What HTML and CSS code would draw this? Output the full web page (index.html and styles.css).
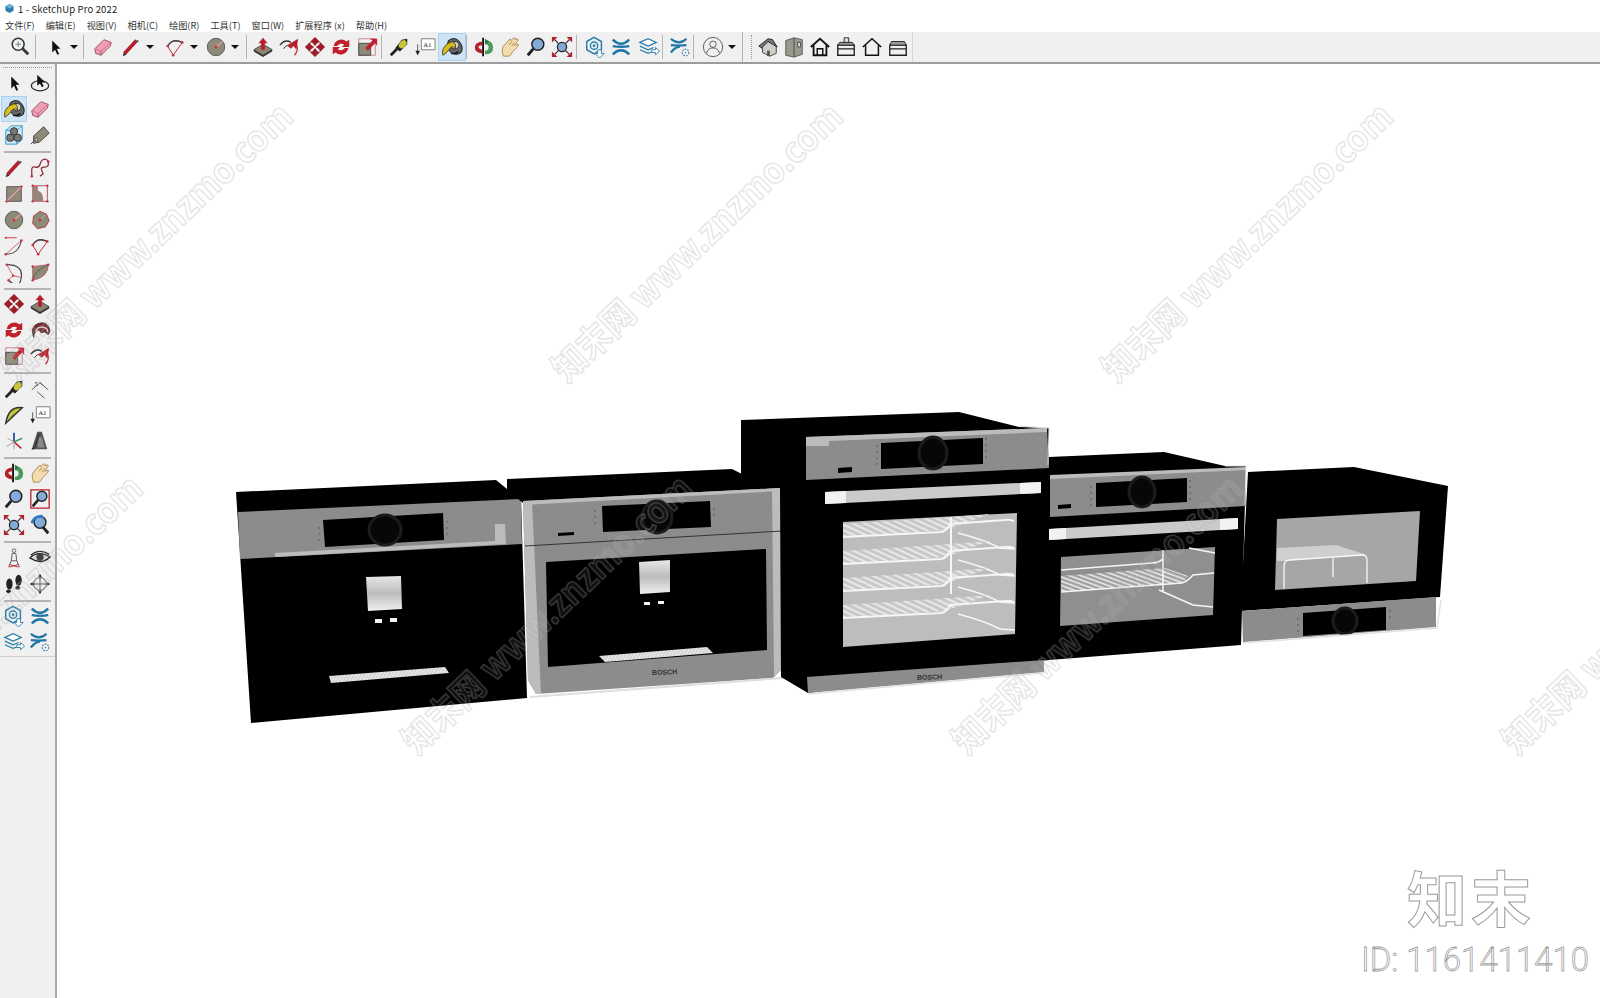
FILE: index.html
```html
<!DOCTYPE html>
<html lang="zh-CN">
<head>
    <meta charset="UTF-8" />
    <title>1 - SketchUp Pro 2022</title>
    <link rel="stylesheet" href="styles.css">
</head>
<body>
<svg class="defs" width="0" height="0">
    <defs>
        <!-- iconos de la barra -->
        <symbol id="i-search" viewBox="0 0 24 24"><circle cx="10" cy="9" r="6.5" fill="#eef3f3" stroke="#333" stroke-width="1.6"/><path d="M10 6v6M7 9h6" stroke="#777"/><path d="M15 14l6 6" stroke="#333" stroke-width="3"/></symbol>
        <symbol id="i-select" viewBox="0 0 24 24"><path d="M9 5v13l3-3 2.5 5.5 2-1-2.500-5.500h4z" fill="#111"/></symbol>
        <symbol id="i-eraser" viewBox="0 0 24 24"><path d="M3 14L13 4l8 3-1 4-10 10-6-2z" fill="#f0a0b6" stroke="#9c4a62"/><path d="M4 14l6 3 10-10" fill="none" stroke="#c86a86"/><path d="M10 17v4" stroke="#9c4a62"/></symbol>
        <symbol id="i-pencil" viewBox="0 0 24 24"><path d="M5 19L18 5" stroke="#b3202c" stroke-width="4"/><path d="M3 22l1-4 3 2.500z" fill="#333"/><path d="M17 6l2-2 1.500 1.500-2 2z" fill="#555"/></symbol>
        <symbol id="i-arc3" viewBox="0 0 24 24"><path d="M4 11Q9 2 20 7L10 21z" fill="none" stroke="#b3202c"/><path d="M4 11Q9 2 20 7" fill="none" stroke="#444" stroke-width="1.400"/><g fill="#c8303c"><circle cx="4" cy="11" r="1.400"/><circle cx="20" cy="7" r="1.400"/><circle cx="10" cy="21" r="1.400"/></g></symbol>
        <symbol id="i-circle" viewBox="0 0 24 24"><circle cx="12" cy="12" r="9.500" fill="#8f8a78" stroke="#555"/><path d="M12 12l7-6" stroke="#e0a0a8" stroke-width="1.400"/><circle cx="12" cy="12" r="1.500" fill="#c8303c"/></symbol>
        <symbol id="i-poly" viewBox="0 0 24 24"><path d="M12 2.500l7 3 3 7-4 7-9 2-5-6 1-8z" fill="#8f8a78" stroke="#b04050"/><path d="M12 12l6-6" stroke="#e0a0a8"/><circle cx="12" cy="12" r="1.500" fill="#c8303c"/></symbol>
        <symbol id="i-push" viewBox="0 0 24 24"><path d="M2 15l10-6 10 6-10 6z" fill="#8a8672" stroke="#444"/><path d="M2 15v2l10 6 10-6v-2l-10 6z" fill="#333"/><path d="M12 2l5 6h-3v7h-4V8H7z" fill="#b81e2a"/></symbol>
        <symbol id="i-follow" viewBox="0 0 24 24"><path d="M2 10Q8 3 14 7" fill="none" stroke="#333" stroke-width="1.500"/><path d="M6 14Q9 9 13 11" fill="none" stroke="#333"/><path d="M18 21Q23 15 20 9" fill="none" stroke="#c8303c" stroke-width="1.400"/><path d="M10 10l12-7-2 12-3-4-3 3z" fill="#b81e2a"/></symbol>
        <symbol id="i-move" viewBox="0 0 24 24"><g fill="#9c1c28"><path d="M12 1l5.500 5.500-3 1L12 11 9.500 7.500l-3-1z"/><path d="M12 23l5.500-5.500-3-1L12 13l-2.500 3.500-3 1z"/><path d="M1 12l5.500-5.500 1 3L11 12l-3.500 2.500-1 3z"/><path d="M23 12l-5.500-5.500-1 3L13 12l3.500 2.500 1 3z"/></g></symbol>
        <symbol id="i-rotate" viewBox="0 0 24 24"><path d="M4 11a8.500 8.500 0 0 1 14-5l3-2v8h-8l2.500-2.500A5 5 0 0 0 8 11z" fill="#c0202c"/><path d="M20 13a8.500 8.500 0 0 1-14 5l-3 2v-8h8l-2.500 2.500A5 5 0 0 0 16 13z" fill="#c0202c"/></symbol>
        <symbol id="i-scale" viewBox="0 0 24 24"><path d="M3 3h18v18H3z" fill="none" stroke="#c8808a"/><path d="M3 8h13v13H3z" fill="#8f8a78" stroke="#444"/><path d="M10 13l8-8-3-2h8v8l-2-3-8 8z" fill="#c0202c"/></symbol>
        <symbol id="i-offset" viewBox="0 0 24 24"><path d="M5 20Q1 8 10 5t12 5q2 4-1 7l-4-3-4 1q-2-5-5-2t-3 7z" fill="#7a2a32" stroke="#333"/><path d="M7 14q2-6 8-5t5 5" fill="none" stroke="#e4d8c8" stroke-width="1.500"/></symbol>
        <symbol id="i-tape" viewBox="0 0 24 24"><path d="M3 21l7-7" stroke="#222" stroke-width="3"/><path d="M8 13l7-9 6-1 0 6-8 8z" fill="#222"/><ellipse cx="16" cy="9" rx="3.500" ry="5" fill="#c9c43a" transform="rotate(40 16 9)"/></symbol>
        <symbol id="i-dims" viewBox="0 0 24 24"><path d="M3 13L12 5l3 3M12 5l9 8M9 15l8 7" fill="none" stroke="#555"/><text x="6" y="9" class="ico-txt">5</text></symbol>
        <symbol id="i-proto" viewBox="0 0 24 24"><path d="M3 21L21 4q-15-2-18 17z" fill="#c9c43a" stroke="#333" stroke-width="1.600"/><path d="M7 17q3-5 8-8" fill="none" stroke="#555"/></symbol>
        <symbol id="i-text" viewBox="0 0 24 24"><path d="M8 3h15v12H8z" fill="#fff" stroke="#777"/><text x="10" y="12.500" class="ico-txt">A1</text><path d="M4 9v8" stroke="#555"/><path d="M1.500 16h5L4 21z" fill="#222"/></symbol>
        <symbol id="i-axes" viewBox="0 0 24 24"><path d="M12 3v10" stroke="#2950a8" stroke-width="2"/><path d="M12 13l9-4" stroke="#3b9a5a" stroke-width="1.600"/><path d="M12 13l8 7" stroke="#c0202c" stroke-width="1.600"/><path d="M12 13l-8 5" stroke="#999"/><path d="M12 13L5 9" stroke="#999"/><path d="M12 13v8" stroke="#999"/></symbol>
        <symbol id="i-a3d" viewBox="0 0 24 24"><path d="M9 2h5l6 19H3z" fill="#555"/><path d="M3 21l3-1 5-16" fill="none" stroke="#222"/><path d="M11 8h3l3 11h-8z" fill="#8a8a8a"/></symbol>
        <symbol id="i-paint" viewBox="0 0 24 24"><path d="M8 5q7-5 12 1t2 12q-5 4-11 0T8 5z" fill="#666" stroke="#111"/><ellipse cx="15" cy="10" rx="4.500" ry="4" fill="#d8d4c4" stroke="#222"/><path d="M2 21q-2-8 6-13t8 5q-4-3-7 1.500T2 21z" fill="#d9bf1e" stroke="#222" stroke-width=".8"/><path d="M11 19q4 1 8-2" fill="none" stroke="#111" stroke-width="1.500"/></symbol>
        <symbol id="i-orbit" viewBox="0 0 24 24"><path d="M11 2v20" stroke="#111" stroke-width="2"/><path d="M10 6Q2 7 2 12.500T10 19v-4q-4-1-4-3t4-2z" fill="#b81e2a"/><path d="M13 5q9 0 9 7.500T13 20v-4q4 0 4-3.500T13 9z" fill="#4d9a5e"/><path d="M13 3l5 3-5 3z" fill="#2e7a44"/></symbol>
        <symbol id="i-orbit2" viewBox="0 0 24 24"><ellipse cx="12" cy="15" rx="9.500" ry="5.500" fill="none" stroke="#333" stroke-width="1.400"/><path d="M9 3v12l3-2.500 2 4 2-1-2-4h4z" fill="#111"/></symbol>
        <symbol id="i-pan" viewBox="0 0 24 24"><path d="M5 22q-3-7 0-11l6-7q2-1 2 1l3-3q2 0 1.500 2L20 3q2 1 0 3l-3 4 4-1q1 2-2 4l-4 4q-2 4-4 5z" fill="#f3dcae" stroke="#a58a58"/><path d="M11 10l3-4M14 11l3-4" stroke="#a58a58" fill="none"/></symbol>
        <symbol id="i-zoom" viewBox="0 0 24 24"><circle cx="14" cy="9" r="6.500" fill="#82abd8" stroke="#222" stroke-width="1.600"/><path d="M9 14l-6 7" stroke="#222" stroke-width="3.200"/></symbol>
        <symbol id="i-zoomw" viewBox="0 0 24 24"><path d="M2 2h20v20H2z" fill="none" stroke="#b81e2a" stroke-width="1.400"/><circle cx="14" cy="9" r="5.500" fill="#82abd8" stroke="#222" stroke-width="1.500"/><path d="M10 13l-6 7" stroke="#222" stroke-width="2.800"/></symbol>
        <symbol id="i-ext" viewBox="0 0 24 24"><circle cx="12" cy="12" r="5" fill="#82abd8" stroke="#222" stroke-width="1.400"/><path d="M8 8L4 4M16 8l4-4M8 16l-4 4M16 16l4 4" stroke="#333" stroke-width="1.400"/><path d="M1 1h6L1 7zM23 1h-6l6 6zM1 23h6l-6-6zM23 23h-6l6-6z" fill="#b81e2a"/></symbol>
        <symbol id="i-prev" viewBox="0 0 24 24"><circle cx="12" cy="9" r="6.500" fill="#82abd8" stroke="#222" stroke-width="1.500"/><path d="M3 10q3-9 11-7l-1-2" fill="none" stroke="#2a78c8" stroke-width="2.600"/><path d="M15 14l6 7" stroke="#222" stroke-width="3.200"/></symbol>
        <symbol id="i-walk" viewBox="0 0 24 24"><circle cx="12" cy="4" r="2" fill="none" stroke="#666"/><path d="M10 7h4l1 8h-6zM9 15l-3 7M15 15l3 7" fill="none" stroke="#555"/><path d="M7 19l10 3M17 19L7 22" stroke="#c0202c"/></symbol>
        <symbol id="i-eye" viewBox="0 0 24 24"><path d="M1 12Q10 3 23 11q-9 9-22 1z" fill="#ddd" stroke="#222" stroke-width="1.500"/><circle cx="12" cy="11" r="4" fill="#444"/><path d="M2 9q9-8 20-1" fill="none" stroke="#333" stroke-width="1.500"/></symbol>
        <symbol id="i-foot" viewBox="0 0 24 24"><ellipse cx="7" cy="12" rx="3.500" ry="6" fill="#222"/><ellipse cx="6" cy="20" rx="2.500" ry="2" fill="#222"/><ellipse cx="17" cy="8" rx="3.500" ry="6" fill="#222"/><ellipse cx="16" cy="16" rx="2.500" ry="2" fill="#222"/></symbol>
        <symbol id="i-pos" viewBox="0 0 24 24"><circle cx="12" cy="12" r="7" fill="none" stroke="#444"/><path d="M12 2v20M2 12h20" stroke="#444"/><path d="M12 1l2 3h-4zM12 23l2-3h-4zM1 12l3-2v4zM23 12l-3-2v4z" fill="#222"/></symbol>
        <symbol id="i-ware" viewBox="0 0 24 24"><path d="M11 1.500l8 4.500v9l-8 4.500L3 15V6z" fill="none" stroke="#2a7ea8" stroke-width="1.600"/><circle cx="11" cy="10.500" r="4" fill="none" stroke="#2a7ea8" stroke-width="1.500"/><circle cx="11" cy="10.500" r="1.500" fill="#2a7ea8"/><path d="M15 15h4v4h3l-5 5-5-5h3z" fill="#fff" stroke="#2a7ea8"/></symbol>
        <symbol id="i-xw" viewBox="0 0 24 24"><path d="M3 4q9 9 18 0M3 20q9-9 18 0M3 11q9 1.500 18 0" fill="none" stroke="#1f77a8" stroke-width="2.600"/></symbol>
        <symbol id="i-stack" viewBox="0 0 24 24"><path d="M2 7l9-4 9 4-9 4z" fill="#fff" stroke="#2a7ea8" stroke-width="1.300"/><path d="M2 11l9 4 6-2.500M2 15l9 4 4-1.500" fill="none" stroke="#2a7ea8" stroke-width="1.300"/><path d="M15 15h4v-2.500l4.500 4-4.500 4V18h-4z" fill="#fff" stroke="#2a7ea8"/></symbol>
        <symbol id="i-xgear" viewBox="0 0 24 24"><path d="M2 3q9 8 17 0M2 18q6-7 10-6M2 10q9 1 17 0" fill="none" stroke="#1f77a8" stroke-width="2.400"/><circle cx="18" cy="18" r="3.500" fill="#fff" stroke="#5a8aa8" stroke-width="1.500" stroke-dasharray="2 1"/><circle cx="18" cy="18" r="1" fill="#5a8aa8"/></symbol>
        <symbol id="i-cube" viewBox="0 0 24 24"><path d="M3 7l6-5h12v15l-6 5H3z" fill="#cfe8f2" stroke="#2a9bd0"/><path d="M3 7h12v15M15 7l6-5" fill="none" stroke="#2a9bd0"/><circle cx="12" cy="8" r="4" fill="#777" stroke="#333"/><circle cx="8" cy="15" r="4" fill="#777" stroke="#333"/><circle cx="16" cy="15" r="4" fill="#777" stroke="#333"/></symbol>
        <symbol id="i-tag" viewBox="0 0 24 24"><path d="M5 13L16 3l6 7-11 10-6 1z" fill="#8f8a78" stroke="#444"/><circle cx="8" cy="17" r="1.500" fill="#fff" stroke="#333"/><path d="M2 22l3-3" stroke="#333"/></symbol>
        <symbol id="i-free" viewBox="0 0 24 24"><path d="M3 21V14q0-4 4-3t5-3 3-5q5-2 6 3t-4 5-3 4 1 4-3 2" fill="none" stroke="#8a2e38" stroke-width="1.400"/><circle cx="3" cy="21" r="1.400" fill="#c8303c"/><circle cx="21" cy="5" r="1.400" fill="#c8303c"/></symbol>
        <symbol id="i-rect" viewBox="0 0 24 24"><path d="M4 4h16v16H4z" fill="#8f8a78" stroke="#555"/><path d="M4 20L20 4" stroke="#e0a0a8" stroke-width="1.500"/><circle cx="20" cy="4" r="1.300" fill="#c8303c"/><circle cx="4" cy="20" r="1.300" fill="#c8303c"/></symbol>
        <symbol id="i-rrect" viewBox="0 0 24 24"><path d="M4 3h16v17H4z" fill="#8f8a78" stroke="#c06070"/><path d="M9 3v6q6 0 6 11h5V3z" fill="#f0f0f0" stroke="#c06070"/><g fill="#c8303c"><circle cx="4" cy="3" r="1.300"/><circle cx="20" cy="3" r="1.300"/><circle cx="4" cy="20" r="1.300"/><circle cx="20" cy="20" r="1.300"/></g></symbol>
        <symbol id="i-arc" viewBox="0 0 24 24"><path d="M3 3h12" stroke="#c8303c"/><path d="M3 21L20 6" stroke="#c06070"/><path d="M3 21q14 0 17-15" fill="none" stroke="#555" stroke-width="1.300"/><g fill="#c8303c"><circle cx="3" cy="21" r="1.400"/><circle cx="20" cy="6" r="1.400"/><circle cx="3" cy="3" r="1.200"/></g></symbol>
        <symbol id="i-arc2" viewBox="0 0 24 24"><path d="M4 4Q22 4 20 18t-14 3" fill="none" stroke="#444" stroke-width="1.300"/><path d="M4 4l7 12 9 2M6 21l5-5" fill="none" stroke="#c06070"/><g fill="#c8303c"><circle cx="4" cy="4" r="1.300"/><circle cx="11" cy="16" r="1.300"/><circle cx="6" cy="21" r="1.300"/></g></symbol>
        <symbol id="i-pie" viewBox="0 0 24 24"><path d="M4 21V6l17-2q0 14-17 17z" fill="#8f8a78" stroke="#c06070"/><path d="M4 21q2-11 17-17" stroke="#555" fill="none"/><g fill="#c8303c"><circle cx="4" cy="21" r="1.300"/><circle cx="21" cy="4" r="1.300"/><circle cx="4" cy="6" r="1.300"/></g></symbol>
        <symbol id="i-h3d" viewBox="0 0 24 24"><path d="M6 10l7-6 8 7v8l-7 3-8-4z" fill="#cfcfc8" stroke="#444"/><path d="M2 11l10-8 5 1 5 8-10-6-7 7z" fill="#777" stroke="#222"/><path d="M11 16h3v6h-3z" fill="#555"/></symbol>
        <symbol id="i-door" viewBox="0 0 24 24"><path d="M3 5l9-3 9 2v16l-9 3-9-2z" fill="#9a9a8c" stroke="#555"/><path d="M12 2v21" stroke="#444"/><path d="M16 7h3v5h-3z" fill="#e8e8e0" stroke="#444"/></symbol>
        <symbol id="i-home1" viewBox="0 0 24 24"><path d="M2 12l10-9 10 9M5 10v11h14V10" fill="none" stroke="#111" stroke-width="2"/><path d="M9 21v-7h6v7" fill="none" stroke="#111" stroke-width="1.600"/></symbol>
        <symbol id="i-home2" viewBox="0 0 24 24"><path d="M3 10h18v11H3zM3 14h18" fill="none" stroke="#222" stroke-width="1.500"/><path d="M3 10l2-3h14l2 3z" fill="#999" stroke="#222"/><path d="M10 2h5v5h-5z" fill="#ddd" stroke="#222"/></symbol>
        <symbol id="i-home3" viewBox="0 0 24 24"><path d="M2 12l10-9 10 9M5 10v11h14V10" fill="none" stroke="#111" stroke-width="1.600"/></symbol>
        <symbol id="i-home4" viewBox="0 0 24 24"><path d="M3 10h18v11H3zM3 14h18" fill="none" stroke="#222" stroke-width="1.500"/><path d="M3 10l2-4h14l2 4z" fill="#999" stroke="#222"/></symbol>
        <symbol id="i-user" viewBox="0 0 24 24"><circle cx="12" cy="12" r="10.500" fill="none" stroke="#555"/><circle cx="12" cy="9" r="3.500" fill="none" stroke="#555"/><path d="M5 19q1-6 7-6t7 6" fill="none" stroke="#555"/></symbol>
    </defs>
</svg>

<div class="app">
    <header class="titlebar">
        <svg class="title-ico" viewBox="0 0 10 10"><path d="M5 0l4.500 2.500v5L5 10 .5 7.500v-5z" fill="#2e7fb0"/><path d="M5 0l4.500 2.500L5 5 .5 2.500z" fill="#6fb0d6"/></svg>
        <span>1 - SketchUp Pro 2022</span>
    </header>
    <nav class="menubar">
        <span>文件(F)</span><span>编辑(E)</span><span>视图(V)</span><span>相机(C)</span><span>绘图(R)</span><span>工具(T)</span><span>窗口(W)</span><span>扩展程序 (x)</span><span>帮助(H)</span>
    </nav>

    <div class="toolbar">
        <svg class="ico"><use href="#i-search"/></svg>
        <i class="sep s1"></i>
        <svg class="ico"><use href="#i-select"/></svg><b class="caret"></b>
        <i class="sep s2"></i>
        <svg class="ico"><use href="#i-eraser"/></svg>
        <svg class="ico g2"><use href="#i-pencil"/></svg><b class="caret"></b>
        <svg class="ico g4"><use href="#i-arc3"/></svg><b class="caret"></b>
        <svg class="ico g3"><use href="#i-circle"/></svg><b class="caret"></b>
        <i class="sep s3"></i>
        <svg class="ico"><use href="#i-push"/></svg>
        <svg class="ico"><use href="#i-follow"/></svg>
        <svg class="ico"><use href="#i-move"/></svg>
        <svg class="ico"><use href="#i-rotate"/></svg>
        <svg class="ico"><use href="#i-scale"/></svg>
        <i class="sep s4"></i>
        <svg class="ico"><use href="#i-tape"/></svg>
        <svg class="ico"><use href="#i-text"/></svg>
        <span class="on"><svg class="ico"><use href="#i-paint"/></svg></span>
        <i class="sep s5"></i>
        <svg class="ico"><use href="#i-orbit"/></svg>
        <svg class="ico"><use href="#i-pan"/></svg>
        <svg class="ico"><use href="#i-zoom"/></svg>
        <svg class="ico"><use href="#i-ext"/></svg>
        <i class="sep s6"></i>
        <svg class="ico"><use href="#i-ware"/></svg>
        <svg class="ico"><use href="#i-xw"/></svg>
        <svg class="ico g2"><use href="#i-stack"/></svg>
        <i class="sep s7"></i>
        <svg class="ico"><use href="#i-xgear"/></svg>
        <i class="sep s7"></i>
        <svg class="ico g5"><use href="#i-user"/></svg><b class="caret"></b>
        <i class="sep s8"></i>
        <i class="grip"></i>
        <svg class="ico"><use href="#i-h3d"/></svg>
        <svg class="ico"><use href="#i-door"/></svg>
        <svg class="ico"><use href="#i-home1"/></svg>
        <svg class="ico"><use href="#i-home2"/></svg>
        <svg class="ico"><use href="#i-home3"/></svg>
        <svg class="ico"><use href="#i-home4"/></svg>
        <i class="end"></i>
    </div>

    <div class="workarea">
        <aside class="sidebar">
            <div class="tools">
                <i class="grip-h"></i>
                <div class="tool-grid">
                    <svg class="ico"><use href="#i-select"/></svg><svg class="ico"><use href="#i-orbit2"/></svg>
                    <span class="on"><svg class="ico"><use href="#i-paint"/></svg></span><svg class="ico"><use href="#i-eraser"/></svg>
                    <svg class="ico"><use href="#i-cube"/></svg><svg class="ico"><use href="#i-tag"/></svg>
                </div>
                <hr class="rule">
                <div class="tool-grid">
                    <svg class="ico"><use href="#i-pencil"/></svg><svg class="ico"><use href="#i-free"/></svg>
                    <svg class="ico"><use href="#i-rect"/></svg><svg class="ico"><use href="#i-rrect"/></svg>
                    <svg class="ico"><use href="#i-circle"/></svg><svg class="ico"><use href="#i-poly"/></svg>
                    <svg class="ico"><use href="#i-arc"/></svg><svg class="ico"><use href="#i-arc3"/></svg>
                    <svg class="ico"><use href="#i-arc2"/></svg><svg class="ico"><use href="#i-pie"/></svg>
                </div>
                <hr class="rule">
                <div class="tool-grid">
                    <svg class="ico"><use href="#i-move"/></svg><svg class="ico"><use href="#i-push"/></svg>
                    <svg class="ico"><use href="#i-rotate"/></svg><svg class="ico"><use href="#i-offset"/></svg>
                    <svg class="ico"><use href="#i-scale"/></svg><svg class="ico"><use href="#i-follow"/></svg>
                </div>
                <hr class="rule">
                <div class="tool-grid">
                    <svg class="ico"><use href="#i-tape"/></svg><svg class="ico"><use href="#i-dims"/></svg>
                    <svg class="ico"><use href="#i-proto"/></svg><svg class="ico"><use href="#i-text"/></svg>
                    <svg class="ico"><use href="#i-axes"/></svg><svg class="ico"><use href="#i-a3d"/></svg>
                </div>
                <hr class="rule">
                <div class="tool-grid">
                    <svg class="ico"><use href="#i-orbit"/></svg><svg class="ico"><use href="#i-pan"/></svg>
                    <svg class="ico"><use href="#i-zoom"/></svg><svg class="ico"><use href="#i-zoomw"/></svg>
                    <svg class="ico"><use href="#i-ext"/></svg><svg class="ico"><use href="#i-prev"/></svg>
                </div>
                <hr class="rule">
                <div class="tool-grid">
                    <svg class="ico"><use href="#i-walk"/></svg><svg class="ico"><use href="#i-eye"/></svg>
                    <svg class="ico"><use href="#i-foot"/></svg><svg class="ico"><use href="#i-pos"/></svg>
                </div>
                <hr class="rule">
                <div class="tool-grid">
                    <svg class="ico"><use href="#i-ware"/></svg><svg class="ico"><use href="#i-xw"/></svg>
                    <svg class="ico"><use href="#i-stack"/></svg><svg class="ico"><use href="#i-xgear"/></svg>
                </div>
            </div>
        </aside>

        <main class="viewport">
            <!-- modelo: coordenadas de la ventana completa -->
            <svg class="scene" viewBox="0 0 1600 998">
                <defs>
                    <linearGradient id="steel" x1="0" y1="0" x2="0" y2="1"><stop offset="0" stop-color="#e6e6e6"/><stop offset=".5" stop-color="#bdbdbd"/><stop offset="1" stop-color="#efefef"/></linearGradient>
                    <pattern id="hatch" width="5" height="5" patternUnits="userSpaceOnUse" patternTransform="rotate(-65)"><rect width="5" height="5" fill="#c8c8c8"/><rect width="2" height="5" fill="#e8e8e8"/></pattern>
                    <pattern id="hatch2" width="4" height="4" patternUnits="userSpaceOnUse" patternTransform="rotate(-70)"><rect width="4" height="4" fill="#a0a0a0"/><rect width="1.500" height="4" fill="#eee"/></pattern>
                    <pattern id="fine" width="3" height="3" patternUnits="userSpaceOnUse" patternTransform="rotate(30)"><rect width="3" height="3" fill="#d4d4d4"/><rect width="1" height="3" fill="#ededed"/></pattern>
                    <g id="rack">
                        <path d="M843 524L950 517 990 514 945 530 843 537z" fill="url(#hatch)"/>
                        <path d="M843 537L941 532Q947 531 950 524L1005 520Q1008 519 1014 521" fill="none" stroke="#f6f6f6" stroke-width="2"/>
                        <path d="M958 533Q985 540 1000 548L1015 549" fill="none" stroke="#f6f6f6" stroke-width="1.500"/>
                    </g>
                </defs>

                <!-- cafetera izquierda -->
                <path class="blk" d="M236 492L496 480 507 489 521 499 527 698 251 723z"/>
                <path class="gry" d="M238 512L521 499 522 544 240 559z"/>
                <path class="lgt" d="M275 553L495 541V524L505 524 506 544 275 557z"/>
                <path class="blk" d="M323 520L443 513 444 540 325 547z"/>
                <ellipse class="knob" cx="385" cy="530" rx="16" ry="15"/>
                <path class="dots" d="M319 527v14M447 521v14"/>
                <path fill="url(#steel)" d="M366 577L401 576 402 609 368 611z"/>
                <path class="wht" d="M375 619h7v4h-7zM390 618h7v4h-7z"/>
                <path fill="url(#fine)" d="M329 676L445 667 449 673 331 683z"/>

                <!-- cafetera central -->
                <path class="blk" d="M507 479L732 469 746 476 782 488 523 503 507 490z"/>
                <path class="gry" d="M523 501L781 488 783 668 773 678 536 694 528 680z"/>
                <path class="lgt" d="M523 501L532 501 541 694 536 694 528 680zM772 489L781 488 783 668 774 676z"/>
                <path class="lgt" d="M523 501L781 488 781 491 523 505z"/>
                <path d="M525 546L782 531" stroke="#333" fill="none"/>
                <path class="blk" d="M602 506L710 501 711 527 603 532z"/>
                <ellipse class="knob" cx="657" cy="517" rx="15" ry="16"/>
                <path class="dots" d="M595 510v16M714 508v12"/>
                <path class="blk" d="M558 533L574 532V535L558 536z"/>
                <path class="blk" d="M546 562L766 549 767 650 548 667z"/>
                <path fill="url(#steel)" d="M639 562L670 560 670 592 640 594z"/>
                <path class="wht" d="M644 602h6v3h-6zM658 601h6v3h-6z"/>
                <path fill="url(#fine)" d="M599 656L707 647 713 653 605 662z"/>
                <text class="brand" x="652" y="675" transform="rotate(-2 652 675)">BOSCH</text>
                <path d="M530 697L783 678" fill="none" stroke="#dedede" stroke-width="2"/>

                <!-- horno grande -->
                <path class="blk" d="M741 420L959 412 1019 427 1049 428V660L808 693 781 677 780 488 741 475z"/>
                <path class="gry" d="M806 437L1047 428 1049 468 806 480z"/>
                <path class="lgt" d="M806 437L1047 428V432L829 441V446L806 446z"/>
                <path class="blk" d="M881 443L983 438V464L881 469z"/>
                <ellipse class="knob" cx="933" cy="453" rx="14" ry="16"/>
                <path class="dots" d="M877 445v24M986 438v24"/>
                <path class="blk" d="M838 468L852 467V472L838 473z"/>
                <path d="M1019 426L1049 428 1048 465" fill="none" stroke="#e0e0e0"/>
                <path fill="#cacaca" d="M825 492L1041 482V493L825 504z"/>
                <path class="wht" d="M825 492L846 491V503L825 504zM1020 483L1041 482V493L1020 494z"/>
                <path fill="#bdbdbd" d="M843 522L1017 513 1015 634 843 647z"/>
                <use href="#rack"/>
                <use href="#rack" y="27"/>
                <use href="#rack" y="54"/>
                <use href="#rack" y="81"/>
                <path d="M951 517V594" stroke="#f6f6f6" stroke-width="2"/>
                <path class="gry" d="M807 677L1044 660V672L808 693z"/>
                <path d="M808 694L1044 673" stroke="#e2e2e2" stroke-width="1.500"/>
                <text class="brand" x="917" y="680" transform="rotate(-2 917 680)">BOSCH</text>

                <!-- horno pequeno -->
                <path class="blk" d="M1049 457L1164 452 1225 466 1246 466 1241 645 1049 660z"/>
                <path class="gry" d="M1050 476L1246 468V506L1050 517z"/>
                <path class="lgt" d="M1050 475L1246 467V470L1050 479z"/>
                <path class="blk" d="M1096 483L1187 478V502L1096 507z"/>
                <ellipse class="knob" cx="1142" cy="492" rx="13" ry="15"/>
                <path class="dots" d="M1091 486v20M1190 480v20"/>
                <path class="blk" d="M1058 505L1071 504V508L1058 509z"/>
                <path d="M1225 466L1246 466 1245 505" fill="none" stroke="#e0e0e0"/>
                <path fill="#cacaca" d="M1049 529L1238 518V529L1049 540z"/>
                <path class="wht" d="M1049 529L1066 528V539L1049 540zM1220 519L1238 518V529L1220 530z"/>
                <path fill="#8f8f8f" d="M1061 557L1215 547 1213 615 1060 626z"/>
                <path fill="url(#hatch2)" d="M1061 576L1165 568 1188 576 1182 583 1061 592z"/>
                <path d="M1061 570L1152 563Q1160 563 1163 558M1061 592L1182 583Q1188 581 1193 575L1214 573M1163 550V592M1189 548L1215 553M1159 590Q1175 597 1193 605L1213 607" fill="none" stroke="#f6f6f6" stroke-width="1.500"/>

                <!-- microondas -->
                <path class="blk" d="M1248 472L1354 467 1448 486 1440 597 1241 611 1240 620z"/>
                <path fill="#a6a6a6" d="M1277 519L1420 511 1416 581 1275 590z"/>
                <path fill="#cfcfcf" d="M1277 548L1336 545 1367 555 1283 561 1277 561z"/>
                <path d="M1284 589V566Q1284 560 1290 560L1362 555Q1367 555 1367 560V583M1333 558V577" fill="none" stroke="#f6f6f6" stroke-width="1.300"/>
                <path class="gry" d="M1242 611L1436 597V627L1243 642z"/>
                <path class="blk" d="M1303 613L1386 607V630L1303 636z"/>
                <ellipse class="knob" cx="1345" cy="621" rx="12" ry="13"/>
                <path class="dots" d="M1298 618v17M1390 610v12"/>
                <path d="M1243 643L1437 628 1441 600" fill="none" stroke="#e2e2e2" stroke-width="1.500"/>
            </svg>
        </main>
    </div>

    <!-- marca de agua, encima de todo -->
    <svg class="wm" viewBox="0 0 1600 998">
        <defs>
            <text id="wm-txt" class="wm-line" transform="rotate(-43.600)" textLength="384" lengthAdjust="spacingAndGlyphs">知末网 www.znzmo.com</text>
        </defs>
        <use href="#wm-txt" transform="translate(17 384)"/>
        <use href="#wm-txt" transform="translate(567 384)"/>
        <use href="#wm-txt" transform="translate(1117 384)"/>
        <use href="#wm-txt" transform="translate(-133 756)"/>
        <use href="#wm-txt" transform="translate(417 756)"/>
        <use href="#wm-txt" transform="translate(967 756)"/>
        <use href="#wm-txt" transform="translate(1517 756)"/>
        <text class="wm-logo" x="1407" y="922" textLength="124">知末</text>
        <text class="wm-id" x="1361" y="971" textLength="228" lengthAdjust="spacingAndGlyphs">ID: 1161411410</text>
    </svg>
</div>
</body>
</html>
```

FILE: styles.css
```css
* {
    box-sizing: border-box;
}

html, body {
    margin: 0;
    height: 100%;
    overflow: hidden;
    background: #fff;
}

body {
    font-family: "Noto Sans CJK SC", "Noto Sans", sans-serif;
    color: #222;
}

.defs {
    position: absolute;
}

.app {
    position: relative;
    width: 1600px;
    height: 998px;
    display: flex;
    flex-direction: column;
}

.titlebar {
    height: 17px;
    padding-left: 5px;
    display: flex;
    align-items: center;
    gap: 4px;
    font-size: 9.5px;
    letter-spacing: .15px;
}

.title-ico {
    width: 9px;
    height: 9px;
}

.menubar {
    height: 15px;
    padding-left: 5px;
    display: flex;
    align-items: center;
    gap: 11px;
    font-size: 9.2px;
    color: #333;
}

/* barra superior */
.toolbar {
    height: 30px;
    padding-left: 7px;
    display: flex;
    align-items: center;
    background: #f0f0f0;
}

.ico {
    width: 22px;
    height: 22px;
    margin: 0 2px;
    flex: none;
    display: block;
}

.ico-txt {
    font: 7.5px "Liberation Serif", serif;
    fill: #222;
}

.g2 { margin-left: 4px; }
.g3 { margin-left: 5px; }
.g4 { margin-left: 8px; }
.g5 { margin-left: 4px; }

.caret {
    width: 12px;
    flex: none;
    display: flex;
    justify-content: center;
}

.caret::after {
    content: "";
    border-left: 4px solid transparent;
    border-right: 4px solid transparent;
    border-top: 4px solid #111;
}

.sep {
    width: 1px;
    height: 24px;
    flex: none;
    background: #b4b4b4;
}

.s1 { margin: 0 6px 0 2px; }
.s2 { margin: 0 6px 0 3px; }
.s3 { margin: 0 3px 0 5px; }
.s4 { margin: 0 4px 0 1px; }
.s5 { margin: 0 4px 0 0; }
.s6 { margin: 0 5px 0 1px; }
.s7 { margin: 0 4px 0 0; }
.s8 { margin: 0 8px 0 4px; height: 30px; }

.grip {
    width: 1px;
    height: 24px;
    flex: none;
    margin-right: 3px;
    border-left: 1px dotted #999;
}

.end {
    width: 1px;
    height: 30px;
    margin-left: 1px;
    background: #d6d6d6;
}

.on {
    width: 28px;
    height: 28px;
    flex: none;
    display: flex;
    align-items: center;
    justify-content: center;
    background: #cde4f7;
    border: 1px solid #a9d2f2;
}

/* barra lateral */
.workarea {
    flex: 1;
    display: flex;
    min-height: 0;
    border-top: 2px solid #9c9c9c;
}

.sidebar {
    width: 57px;
    flex: none;
    background: #f0f0f0;
    border-right: 2px solid #a8a8a8;
}

.tools {
    padding-bottom: 1px;
    border-bottom: 1px solid #d0d0d0;
}

.grip-h {
    display: block;
    height: 1px;
    margin: 3px 3px 2px;
    border-top: 1px dotted #999;
}

.tool-grid {
    display: grid;
    grid-template-columns: 26px 26px;
    grid-auto-rows: 26px;
    padding-left: 1px;
}

.tool-grid .ico,
.tool-grid .on {
    justify-self: center;
    align-self: center;
}

.tool-grid .on {
    width: 26px;
    height: 26px;
}

.rule {
    height: 2px;
    margin: 3px 4px 1.5px;
    border: 0;
    background: #b4b4b4;
}

/* ventana de dibujo */
.viewport {
    flex: 1;
    position: relative;
    background: #fff;
}

.scene {
    position: absolute;
    left: -57px;
    top: -64px;
    width: 1600px;
    height: 998px;
}

.blk { fill: #000; }
.gry { fill: #8c8c8c; }
.lgt { fill: #bcbcbc; }
.wht { fill: #f2f2f2; }

.knob {
    fill: #070707;
    stroke: #1c1c1c;
    stroke-width: 3;
}

.dots {
    fill: none;
    stroke: #5a5a5a;
    stroke-width: 1;
    stroke-dasharray: 2 4;
}

.brand {
    font: bold 7px "Liberation Sans", sans-serif;
    fill: #333;
}

/* marca de agua */
.wm {
    position: absolute;
    left: 0;
    top: 0;
    width: 1600px;
    height: 998px;
    pointer-events: none;
}

.wm-line {
    font: 700 36px "Noto Sans CJK SC", "Noto Sans", sans-serif;
    fill: rgba(255, 255, 255, .06);
    stroke: rgba(170, 170, 170, .3);
    stroke-width: 1.6;
}

.wm-logo {
    font: 700 60px "Noto Sans CJK SC", sans-serif;
    fill: #fff;
    stroke: #9a9a9a;
    stroke-width: 1;
}

.wm-id {
    font: 300 34px Roboto, sans-serif;
    fill: #fff;
    stroke: #a0a0a0;
    stroke-width: .8;
}
```
